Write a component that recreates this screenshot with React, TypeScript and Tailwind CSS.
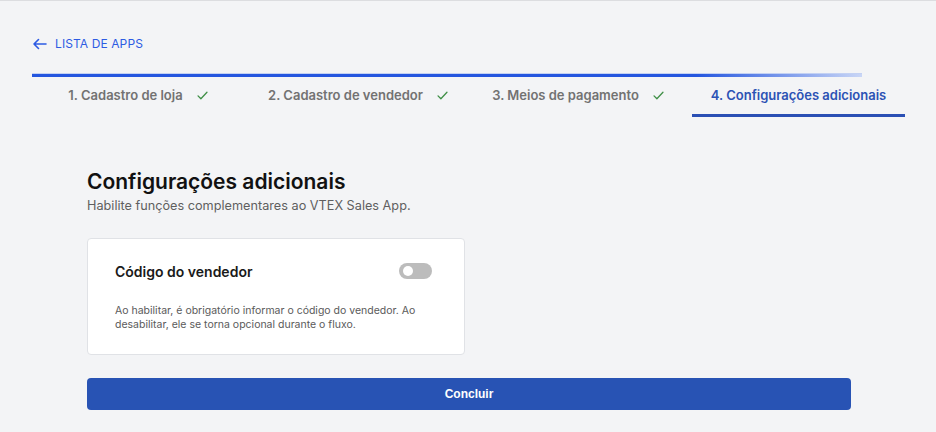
import React from "react";

const Check = () => (
  <svg width="13" height="13" viewBox="0 0 16 16" fill="none" className="shrink-0">
    <path d="M2.5 8.5 L6 12 L13.5 4" stroke="#3f8f46" strokeWidth="1.6" strokeLinecap="round" strokeLinejoin="round" />
  </svg>
);

const tabs = [
  { label: "1. Cadastro de loja", done: true },
  { label: "2. Cadastro de vendedor", done: true },
  { label: "3. Meios de pagamento", done: true },
  { label: "4. Configurações adicionais", done: false },
];

export default function App() {
  return (
    <div
      className="w-[936px] h-[432px] overflow-hidden bg-[#f3f4f6] border-t border-[#dcdde0]"
      style={{ fontFamily: "Inter, 'Noto Sans', sans-serif" }}
    >
      <div className="pl-[32px] pr-[30px]">
        <div className="mt-[35px] h-[16px] flex items-center gap-[8px] text-[#2d5be3]">
          <svg width="15" height="12" viewBox="0 0 15 12" fill="none">
            <path d="M14 6 H2 M6.5 1.5 L2 6 L6.5 10.5" stroke="#2d5be3" strokeWidth="1.6" strokeLinecap="round" strokeLinejoin="round" />
          </svg>
          <span className="text-[12px] tracking-[0.1px]">LISTA DE APPS</span>
        </div>

        <div className="mt-[21px] h-[4px] w-[830px] bg-[linear-gradient(to_right,#2456df_0%,#2456df_80%,#c9d6f6_100%)] border-t border-[#c3d1f3]" />

        <div className="grid grid-cols-[213px_213px_213px_213px] gap-x-[7px]">
          {tabs.map((t) => (
            <div
              key={t.label}
              className={
                "h-[40px] flex items-center justify-center gap-[13px] border-b-[3px] " +
                (t.done ? "border-transparent" : "border-[#2a4fb4]")
              }
            >
              <span
                className={
                  "text-[13px] font-semibold " +
                  (t.done ? "text-[#727272]" : "text-[#2c52b4] text-[12.8px]")
                }
              >
                {t.label}
              </span>
              {t.done && <Check />}
            </div>
          ))}
        </div>
      </div>

      <div className="ml-[87px] w-[764px]">
        <h1 className="mt-[51px] text-[21px] leading-[28px] font-semibold text-[#111]">
          Configurações adicionais
        </h1>
        <p className="mt-[1px] text-[12.7px] leading-[18px] text-[#5f5f5f]">
          Habilite funções complementares ao VTEX Sales App.
        </p>

        <div className="mt-[23px] w-[378px] h-[117px] bg-white border border-[#e0e2e6] rounded-[4px] pt-[22px] pl-[27px] pr-[32px]">
          <div className="flex items-center justify-between h-[20px]">
            <span className="text-[14px] font-semibold text-[#1a1a1a]">Código do vendedor</span>
            <div className="w-[33px] h-[16px] rounded-full bg-[#bcbcbc] flex items-center pl-[4px]">
              <div className="w-[10px] h-[10px] rounded-full bg-white" />
            </div>
          </div>
          <p className="mt-[23px] text-[10.5px] leading-[14px] text-[#5a5a5a]">
            Ao habilitar, é obrigatório informar o código do vendedor. Ao desabilitar, ele se torna opcional durante o fluxo.
          </p>
        </div>

        <button
          className="mt-[23px] w-[764px] h-[32px] rounded-[4px] bg-[#2853b4] text-white text-[12px] font-bold flex items-center justify-center"
          style={{ fontFamily: "'Liberation Sans', Arial, sans-serif" }}
        >
          Concluir
        </button>
      </div>
    </div>
  );
}
